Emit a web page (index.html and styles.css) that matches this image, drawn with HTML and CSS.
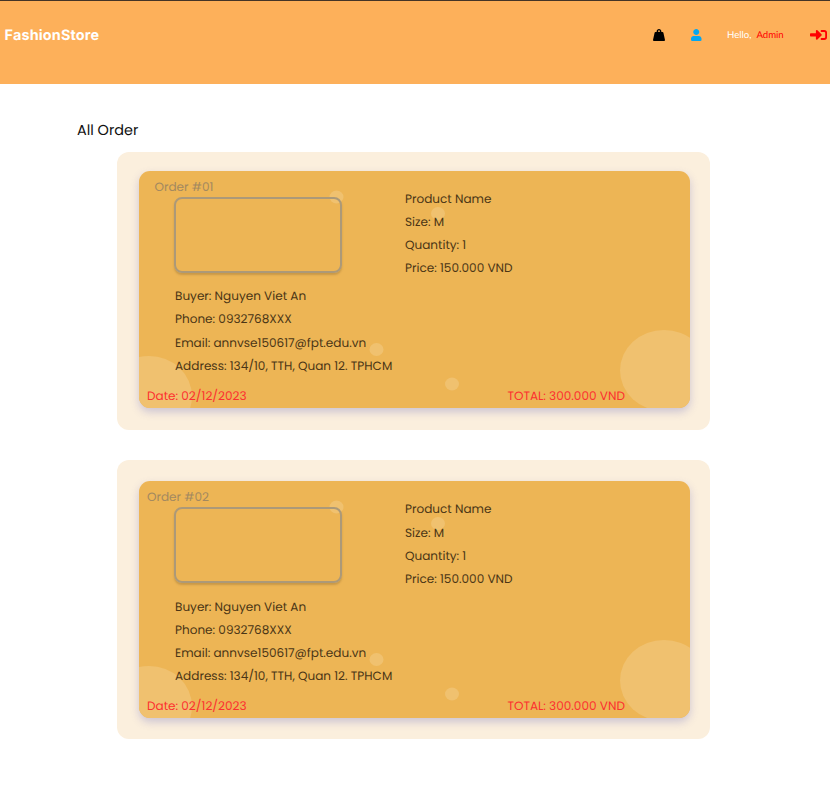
FILE: index.html
```html
<!DOCTYPE html>
<html lang="en">
<head>
<meta charset="utf-8">
<title>FashionStore</title>
<link rel="stylesheet" href="styles.css">
</head>
<body>
<header class="topbar">
  <div class="brand">FashionStore</div>
  <nav class="tools">
    <svg class="bag" viewBox="0 0 12 12"><path fill-rule="evenodd" d="M3.700 3C3.300 1.300 4.500 0 6 0s2.700 1.300 2.300 3h1.200c.5 0 .8.2.9.7L12 10.900c.1.6-.3 1.100-.9 1.100H.9c-.6 0-1-.5-.9-1.100l1.600-7.200c.1-.5.4-.7.9-.7zM6 1.300a.9.900 0 1 0 0 1.800.9.900 0 0 0 0-1.800z"/></svg>
    <svg class="user" viewBox="0 0 448 512"><path d="M224 256c70.700 0 128-57.300 128-128S294.700 0 224 0 96 57.300 96 128s57.300 128 128 128zm110 40H114C51 296 0 347 0 410v62c0 22 18 40 40 40h368c22 0 40-18 40-40v-62c0-63-51-114-114-114z"/></svg>
    <div class="hello"><span>Hello,</span><span class="admin">Admin</span></div>
    <svg class="signin" viewBox="0 0 17 10"><path d="M6.300.3c.3-.3.8-.3 1.100 0l4.100 3.900c.4.400.4 1 0 1.400L7.400 9.600c-.6.6-1.500.1-1.500-.6V6.500H1C.4 6.500 0 6.100 0 5.500V4.300c0-.6.4-1 1-1h4.900V.9c0-.2.1-.4.400-.6z"/><path d="M11.500 1h2.700c1.100 0 1.900.7 1.900 1.700v4.600c0 1-.8 1.700-1.900 1.700h-2.700" fill="none" stroke="currentColor" stroke-width="1.800" stroke-linecap="round"/></svg>
  </nav>
</header>
<main>
  <h1>All Order</h1>
  <section class="panel">
    <article class="order">
      <svg class="bubbles" viewBox="0 0 551 237"><ellipse cx="10" cy="225.500" rx="43" ry="40.500"/><ellipse cx="525" cy="199.500" rx="44" ry="40.500"/><ellipse cx="197.500" cy="26" rx="7" ry="6.500"/><ellipse cx="299" cy="42.500" rx="7" ry="6.500"/><ellipse cx="237.500" cy="178.500" rx="7" ry="6.500"/><ellipse cx="313" cy="213" rx="7" ry="6.500"/></svg>
      <h2 class="indent">Order #01</h2>
      <div class="product">
        <div class="thumb"></div>
        <div class="lines"><p>Product Name</p><p>Size: M</p><p>Quantity: 1</p><p>Price: 150.000 VND</p></div>
      </div>
      <div class="lines buyer"><p>Buyer: Nguyen Viet An</p><p>Phone: 0932768XXX</p><p>Email: annvse150617@fpt.edu.vn</p><p>Address: 134/10, TTH, Quan 12. TPHCM</p></div>
      <footer><span class="date">Date: 02/12/2023</span><span>TOTAL: 300.000 VND</span></footer>
    </article>
  </section>
  <section class="panel second">
    <article class="order">
      <svg class="bubbles" viewBox="0 0 551 237"><ellipse cx="10" cy="225.500" rx="43" ry="40.500"/><ellipse cx="525" cy="199.500" rx="44" ry="40.500"/><ellipse cx="197.500" cy="26" rx="7" ry="6.500"/><ellipse cx="299" cy="42.500" rx="7" ry="6.500"/><ellipse cx="237.500" cy="178.500" rx="7" ry="6.500"/><ellipse cx="313" cy="213" rx="7" ry="6.500"/></svg>
      <h2>Order #02</h2>
      <div class="product">
        <div class="thumb"></div>
        <div class="lines"><p>Product Name</p><p>Size: M</p><p>Quantity: 1</p><p>Price: 150.000 VND</p></div>
      </div>
      <div class="lines buyer"><p>Buyer: Nguyen Viet An</p><p>Phone: 0932768XXX</p><p>Email: annvse150617@fpt.edu.vn</p><p>Address: 134/10, TTH, Quan 12. TPHCM</p></div>
      <footer><span class="date">Date: 02/12/2023</span><span>TOTAL: 300.000 VND</span></footer>
    </article>
  </section>
</main>
</body>
</html>
```
FILE: styles.css
```css
* { box-sizing: border-box; }
body { margin: 0; background: #fff; font-family: Poppins, Inter, sans-serif; font-size: 12.050px; text-rendering: geometricPrecision; }
h1, h2, p { margin: 0; font-weight: 400; }
.topbar { height: 83.500px; border-top: 1px solid #443426; background: #fdb05a; display: flex; justify-content: space-between; align-items: flex-start; padding: 23px 3px 0 4.500px; }
.brand { padding-top: 0.500px; color: #fff; font: 700 14.400px/21px Inter, sans-serif; letter-spacing: 0.170px; }
.tools { display: flex; align-items: center; height: 21px; }
.bag { width: 12px; height: 12px; margin-right: 26px; }
.user { width: 10.500px; height: 12px; margin-right: 25.500px; fill: #05a6f0; }
.hello { display: flex; gap: 5px; width: 57px; margin-right: 26px; padding-top: 1.500px; font: 9.600px/21px Lato, sans-serif; color: #fff; white-space: nowrap; }
.admin { color: #f00; }
.signin { width: 17px; height: 10px; color: #f00; fill: #f00; overflow: visible; }
h1 { font-size: 14.400px; line-height: 22px; padding: 36.500px 0 0 77px; color: #111; }
.panel { width: 593px; height: 278.250px; margin: 10px 0 0 117px; padding: 18.500px 20px 0 22px; border-radius: 12px; background: #fbefdd; }
.second { margin-top: 30px; padding-top: 20.650px; }
.order { position: relative; width: 551px; height: 237px; padding: 7.500px 8px 0; border-radius: 11px; background: #edb555; color: #4b3516; box-shadow: 0 4px 9px rgba(100, 100, 190, .3); }
.bubbles { position: absolute; inset: 0; width: 551px; height: 237px; border-radius: 11px; fill: #f0c16f; overflow: hidden; }
.order > :not(.bubbles) { position: relative; }
h2 { font-size: 12.050px; line-height: 20px; color: #a38960; }
.indent { padding-left: 7.500px; }
.product { display: flex; padding-left: 27.500px; height: 97.300px; }
.thumb { width: 167.500px; height: 76px; margin-top: -1.200px; margin-left: -0.500px; border: 2px solid #ac9978; border-radius: 8px; box-shadow: 0 2px 2px rgba(120, 90, 40, .3); }
.product .lines { margin: -10px 0 0 63.500px; }
.lines p { height: 23.150px; line-height: 23px; white-space: nowrap; }
.buyer { padding-left: 28px; margin-top: -10px; }
footer { display: flex; line-height: 20px; margin-top: 8.700px; color: #fc3030; }
.date { width: 360.500px; }
```
